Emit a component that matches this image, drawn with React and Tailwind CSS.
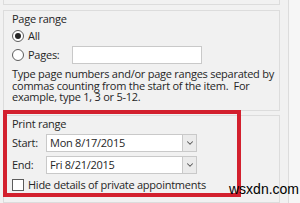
import { ChevronDown } from "lucide-react";

function Radio({ checked }) {
  return (
    <span className="flex h-[12px] w-[12px] shrink-0 items-center justify-center rounded-full border border-[#5c5c5c] bg-white">
      {checked && <span className="h-[6px] w-[6px] rounded-full bg-[#262626]" />}
    </span>
  );
}

function DateField({ label, value }) {
  return (
    <div className="flex h-[18px] items-center">
      <span className="w-[34px]">{label}</span>
      <div className="flex h-[18px] w-[137px] items-center border border-[#c9c9c9] bg-white pl-[3px]">
        {value}
      </div>
      <div className="flex h-[18px] w-[14px] items-center justify-center border border-l-0 border-[#c9c9c9] bg-[#ebebeb]">
        <ChevronDown size={10} strokeWidth={2.5} className="text-[#555]" />
      </div>
    </div>
  );
}

export default function App() {
  return (
    <div className="relative flex h-[203px] w-[300px] overflow-hidden bg-[#f1f1f1] font-['Open_Sans',sans-serif] text-[11px] tracking-[-0.25px] text-[#262626]">
      <div className="flex w-[288px] shrink-0 flex-col pl-[3px] pr-[8px]">
        <div className="h-[5px] border-x border-b border-[#dcdcdc]" />

        <div className="mt-[5px] h-[101px] border border-[#dcdcdc] pl-[8px]">
          <p className="h-[16px] leading-[16px]">Page range</p>
          <div className="flex h-[18px] items-center gap-[4px]">
            <Radio checked />
            <span>All</span>
          </div>
          <div className="flex h-[20px] items-center">
            <Radio />
            <span className="ml-[4px] w-[44px]">Pages:</span>
            <div className="h-[18px] w-[130px] border border-[#c9c9c9] bg-white" />
          </div>
          <p className="mt-[3px] w-[266px] leading-[11.7px]">
            Type page numbers and/or page ranges separated by commas counting from the start of the item.&nbsp; For example, type 1, 3 or 5-12.
          </p>
        </div>

        <div className="mt-[4px] flex-1 border border-[#dcdcdc] pl-[8px]">
          <p className="h-[16px] leading-[16px]">Print range</p>
          <div className="mt-[2px] flex flex-col gap-[4px]">
            <DateField label="Start:" value="Mon 8/17/2015" />
            <DateField label="End:" value="Fri 8/21/2015" />
          </div>
          <div className="mt-[3px] flex items-center gap-[4px]">
            <span className="h-[12px] w-[12px] border border-[#5c5c5c] bg-white" />
            <span>Hide details of private appointments</span>
          </div>
        </div>
      </div>
      <div className="flex-1 border-l border-[#dcdcdc] bg-[#f6f6f6]" />

      <div className="absolute left-[3px] top-[110px] h-[87px] w-[238px] border-[4px] border-[#d3202e]" />
      <span className="absolute left-[229px] top-[181px] font-['Liberation_Sans',sans-serif] text-[14px] leading-[16px] tracking-normal text-black">
        wsxdn.com
      </span>
    </div>
  );
}
